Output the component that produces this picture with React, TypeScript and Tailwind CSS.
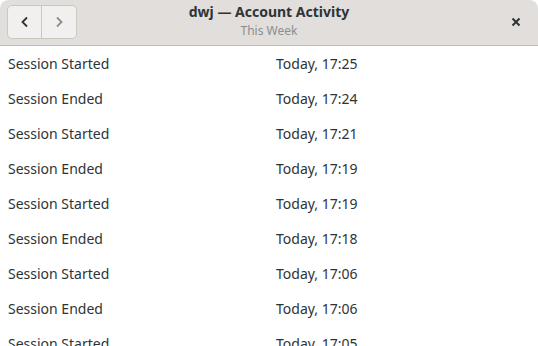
import React from 'react';

const rows: [string, string][] = [
  ['Session Started', 'Today, 17:25'],
  ['Session Ended', 'Today, 17:24'],
  ['Session Started', 'Today, 17:21'],
  ['Session Ended', 'Today, 17:19'],
  ['Session Started', 'Today, 17:19'],
  ['Session Ended', 'Today, 17:18'],
  ['Session Started', 'Today, 17:06'],
  ['Session Ended', 'Today, 17:06'],
  ['Session Started', 'Today, 17:05'],
];

export default function App() {
  return (
    <div
      className="w-[538px] h-[346px] overflow-hidden bg-white text-[#2e3436] flex flex-col rounded-t-[8px]"
      style={{ fontFamily: '"Noto Sans", "Open Sans", sans-serif' }}
    >
      {/* Header bar */}
      <div className="h-[46px] shrink-0 bg-[#e1dedb] border-b border-[#c0bbb6] flex items-center px-[7px] relative rounded-t-[8px]">
        <div className="flex h-[34px] rounded-[5px] border border-[#cdc7c2] bg-[#f1f0ee] overflow-hidden mt-[-2px]">
          <button className="w-[34px] flex items-center justify-center border-r border-[#cdc7c2]">
            <svg width="10" height="12" viewBox="0 0 10 12">
              <path d="M7 1.5 L2.5 6 L7 10.5" fill="none" stroke="#2e3436" strokeWidth="1.8" />
            </svg>
          </button>
          <button className="w-[34px] flex items-center justify-center">
            <svg width="10" height="12" viewBox="0 0 10 12">
              <path d="M3 1.5 L7.5 6 L3 10.5" fill="none" stroke="#8b8e8f" strokeWidth="1.8" />
            </svg>
          </button>
        </div>
        <div className="absolute left-0 right-0 top-[3px] flex flex-col items-center pointer-events-none">
          <div className="text-[14px] font-bold leading-[18px]">dwj — Account Activity</div>
          <div className="text-[12px] leading-[16px] text-[#8b8e8f] mt-[2px]">This Week</div>
        </div>
        <button className="ml-auto mr-[9px] mt-[-2px] w-[12px] h-[12px] flex items-center justify-center">
          <svg width="10" height="10" viewBox="0 0 10 10">
            <path d="M1.5 1.5 L8.5 8.5 M8.5 1.5 L1.5 8.5" stroke="#2e3436" strokeWidth="2" />
          </svg>
        </button>
      </div>

      {/* List */}
      <div className="flex flex-col">
        {rows.map(([label, time], i) => (
          <div key={i} className="h-[35px] shrink-0 flex items-center text-[14px]">
            <div className="w-[276px] pl-[8px]">{label}</div>
            <div>{time}</div>
          </div>
        ))}
      </div>
    </div>
  );
}
